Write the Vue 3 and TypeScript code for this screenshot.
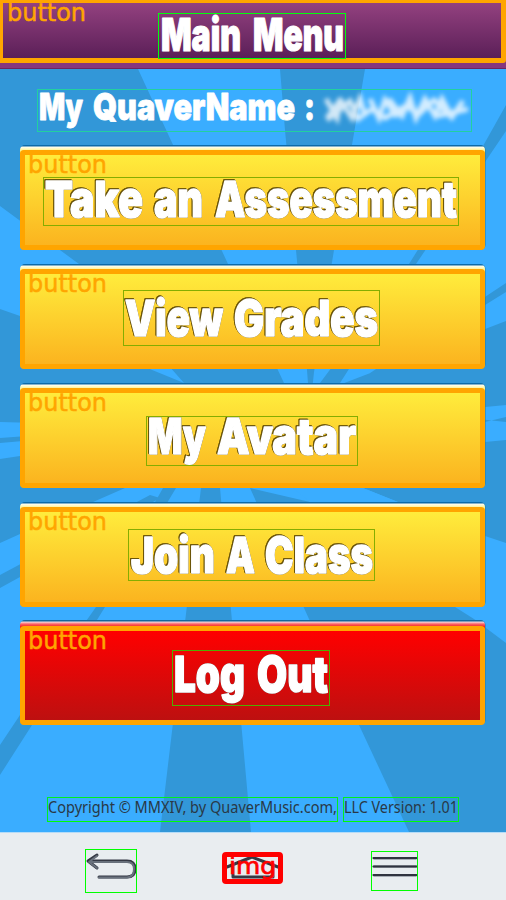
<script setup lang="ts">
interface Word { t: string; x: number; w: number }
interface Item {
  id: string
  box: { w: number; h: number; top: number; left: number }
  base: number
  words: Word[]
  danger?: boolean
}

// Word positions are relative to the label's own box.
const items: Item[] = [
  { id: 'assess', box: { w: 416, h: 49, top: 32, left: 23 }, base: 40,
    words: [{ t: 'Take', x: 2, w: 98 }, { t: 'an', x: 111, w: 49 }, { t: 'Assessment', x: 172, w: 242 }] },
  { id: 'grades', box: { w: 257, h: 56, top: 26, left: 103 }, base: 46,
    words: [{ t: 'View', x: 2, w: 98 }, { t: 'Grades', x: 111, w: 144 }] },
  { id: 'avatar', box: { w: 212, h: 50, top: 33, left: 126 }, base: 38,
    words: [{ t: 'My', x: 2, w: 58 }, { t: 'Avatar', x: 71, w: 139 }] },
  { id: 'join', box: { w: 247, h: 52, top: 27, left: 108 }, base: 44,
    words: [{ t: 'Join', x: 3, w: 84 }, { t: 'A', x: 98, w: 29 }, { t: 'Class', x: 137, w: 108 }] },
  { id: 'logout', box: { w: 158, h: 56, top: 29, left: 152 }, base: 42, danger: true,
    words: [{ t: 'Log', x: 2, w: 71 }, { t: 'Out', x: 85, w: 71 }] },
]
</script>

<template>
  <main class="screen">
    <svg class="rays" viewBox="0 0 506 832" aria-hidden="true">
      <path d="M0 69H138L228 264L284 383L184 383L79 264L0 206ZM0 309L20 316L184 383L240 395L125 488L20 534L0 543Z
        M280 69H365L334 250L314 372L310 410L307 370L296 250L285 130Z
        M506 105V131L416 264L340 383H320L409 264L483 146Z
        M506 283V292L485 305L367 383H355Z M506 321V405L485 407L300 400Z
        M506 417V422L300 400L485 422ZM506 440V543L485 536L398 502L363 488L280 440L485 442Z
        M506 643V832H409L359 725L309 619L250 488L310 502L455 607L474 619Z
        M201 488H220L251 832H160ZM163 488H176L105 607L32 725L0 775V745L20 715L96 607Z
        M0 575L150 495L160 498L20 577L0 588Z" fill="#3297d8" />
      <path d="M0 422L150 426V427L0 438ZM0 443L150 430V433L20 456L0 459ZM293 488H363L398 502H310Z" fill="#3aadff" />
    </svg>

    <header class="header">
      <div class="bar">
        <svg class="tag" width="84" height="25" viewBox="0 0 84 25"><text x="1" y="18" textLength="79" lengthAdjust="spacingAndGlyphs">button</text></svg>
        <svg class="label title" width="188" height="46" viewBox="0 0 188 46">
          <text x="3" y="38" textLength="80" lengthAdjust="spacingAndGlyphs">Main</text>
          <text x="95" y="38" textLength="91" lengthAdjust="spacingAndGlyphs">Menu</text>
        </svg>
      </div>
    </header>

    <section class="name">
      <svg class="label namebox" width="435" height="43" viewBox="0 0 435 43">
        <text x="2" y="31" textLength="44" lengthAdjust="spacingAndGlyphs">My</text>
        <text x="56" y="31" textLength="202" lengthAdjust="spacingAndGlyphs">QuaverName</text>
        <text x="267" y="31" textLength="11" lengthAdjust="spacingAndGlyphs">:</text>
        <g class="masked">
          <path d="M289 10L300 29L304 10L290 29M302 9L315 29L323 10L328 27M333 10L342 29L348 11L360 28L352 10L365 27L373 9L379 29L388 10L398 27L405 10L415 28L426 12" />
          <path d="M290 31L313 12L321 30L335 20L348 29L369 17L382 25L397 11L414 28M400 27L431 20" />
        </g>
      </svg>
    </section>

    <nav class="menu">
      <button v-for="item in items" :key="item.id" type="button" class="item" :class="{ danger: item.danger }">
        <span class="face">
          <svg class="tag" width="84" height="25" viewBox="0 0 84 25"><text x="1" y="18" textLength="79" lengthAdjust="spacingAndGlyphs">button</text></svg>
          <svg
            class="label caption"
            :width="item.box.w" :height="item.box.h"
            :viewBox="`0 0 ${item.box.w} ${item.box.h}`"
            :style="{ marginTop: item.box.top - 10 + 'px', marginLeft: item.box.left - 5 + 'px' }"
          >
            <text v-for="word in item.words" :key="word.t" :x="word.x" :y="item.base" :textLength="word.w" lengthAdjust="spacingAndGlyphs">{{ word.t }}</text>
          </svg>
        </span>
      </button>
    </nav>

    <p class="legal">
      <svg width="291" height="25" viewBox="0 0 291 25"><text x="1" y="16" textLength="289" lengthAdjust="spacingAndGlyphs">Copyright © MMXIV, by QuaverMusic.com,</text></svg>
      <svg width="116" height="25" viewBox="0 0 116 25"><text x="1" y="16" textLength="114" lengthAdjust="spacingAndGlyphs">LLC Version: 1.01</text></svg>
    </p>

    <footer class="toolbar">
      <svg class="icon back" width="52" height="44" viewBox="0 0 52 44">
        <path class="dark" d="M4 12H42Q50 12 50 20Q50 28 42 28H14M12 6L3 12L12 19" />
        <path class="lite" d="M5 13H42Q49 13 49 20Q49 28 42 28.500H14M12 7L4 13L12 19" />
      </svg>
      <svg class="home" width="61" height="32" viewBox="0 0 61 32">
        <path d="M5 15L30 5L56 15M11 13V25H51V12" class="dark" />
        <rect x="2.500" y="2.500" width="56" height="27" rx="1.500" class="frame" />
        <text x="7" y="22" textLength="47" lengthAdjust="spacingAndGlyphs">img</text>
      </svg>
      <svg class="icon lines" width="47" height="40" viewBox="0 0 47 40">
        <path class="lite" d="M3 7.500H45M3 15.500H45M3 24.500H45" />
        <path class="line" d="M2.500 7H45.500M2.500 15.500H45.500M2.500 24H45.500" />
      </svg>
    </footer>
  </main>
</template>

<style>
body { margin: 0; }
</style>

<style scoped>
.screen { position: relative; width: 506px; height: 900px; display: flex; flex-direction: column; background: #3aadff; overflow: hidden; isolation: isolate; }
.rays { position: absolute; left: 0; top: 0; width: 506px; height: 832px; z-index: -1; }
svg { display: block; flex: none; overflow: visible; }

.header { height: 69px; box-sizing: border-box; background: #86367f; border-bottom: 1px solid #70235f; }
.bar { position: relative; height: 63px; box-sizing: border-box; border: solid orange; border-width: 3px 5px 5px 3px; border-bottom-right-radius: 3px; background: linear-gradient(#93417f, #5b1f58); padding: 10px 0 0 155px; }

.tag { position: absolute; left: 2px; top: 0; }
.bar .tag { left: 3px; }
.tag text { font: 25px "DejaVu Sans", sans-serif; fill: orange; stroke: orange; stroke-width: .5px; }

.label { outline: 1px solid #00ff0d; outline-offset: -1px; }
.label text { font-family: "Inter", sans-serif; font-weight: 900; fill: #fff; stroke: #fff; stroke-width: 1.2px; stroke-linejoin: round; }
.title text { font-size: 45px; }

.name { height: 76px; box-sizing: border-box; padding: 20px 0 0 37px; }
.namebox { outline-color: #22d0a0; }
.namebox text { font-size: 37px; stroke-width: .8px; }
.masked { fill: none; stroke: #fff; stroke-width: 5px; opacity: .78; filter: blur(2px); }

.menu { display: flex; flex-direction: column; gap: 14px; padding: 0 20px; }
.item { display: flex; align-items: flex-end; width: 465px; height: 105px; padding: 0; border: 0; border-radius: 5px; background: linear-gradient(#0c6aa8 0 1px, #fffef0 2px, #fff27f 6px, orange 10px); text-align: left; box-shadow: .5px 0 0 #287b9f; }
.danger { margin-top: -1px; background: linear-gradient(#17679c 0 1px, #f4d8db 2px, #f66 4px, #ee1c1c 7px, orange 10px); }
.face { position: relative; display: flow-root; width: 465px; height: 100px; box-sizing: border-box; border: 5px solid orange; border-radius: 4px; background: linear-gradient(#ffec3c, #fbb41f); }
.danger .face { background: linear-gradient(#ff0000, #bd1010); height: 99px; }
.caption { outline-color: #85ad00; }
.caption text { font-size: 50px; stroke-width: 1.6px; filter: drop-shadow(.5px .6px .4px #4a3a00) drop-shadow(-.3px -.3px .3px #6b5508); }
.danger .caption { outline-color: #4fae00; }
.danger .caption text { filter: drop-shadow(.6px .8px .4px #400000); }

.legal { display: flex; gap: 5px; margin: auto 0 10px; padding-left: 47px; }
.legal svg { height: 25px; box-shadow: inset 0 -1px #0f0, inset 0 0 0 1px #00ef20; }
.legal text { font: 15.500px "Noto Sans", sans-serif; fill: #293947; }

.toolbar { display: flex; height: 68px; box-sizing: border-box; padding-left: 85px; background: #e9edf0; border-top: 1px solid #b5dcf8; }
.icon { outline: 1px solid #0f0; outline-offset: -1px; }
.back { margin-top: 16px; }
.home { margin: 19px 0 0 85px; }
.lines { margin: 18px 0 0 88px; }
.toolbar path { fill: none; stroke-linecap: round; stroke-linejoin: round; }
.dark { stroke: #353944; stroke-width: 3px; }
.lite { stroke: #69717c; stroke-width: 2px; }
.line { stroke: #30343f; stroke-width: 2.200px; }
.frame { fill: none; stroke: red; stroke-width: 5px; }
.home text { font: 23px "DejaVu Sans", sans-serif; fill: red; stroke: red; stroke-width: .7px; }
</style>
